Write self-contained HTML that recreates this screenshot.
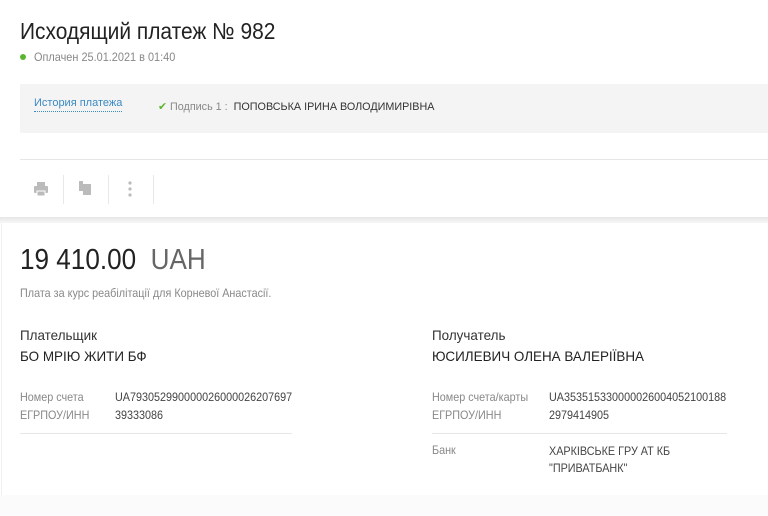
<!DOCTYPE html>
<html><head><meta charset="utf-8"><style>
*{margin:0;padding:0;box-sizing:border-box}
body{width:768px;height:516px;background:#fff;font-family:"Liberation Sans",sans-serif;position:relative;overflow:hidden;color:#222}
.a{position:absolute;white-space:nowrap;transform-origin:0 0}
.n{transform:scaleX(.9)}
.g{color:#888}
</style></head><body>
<div class="a" style="left:20px;top:18px;font-size:23px;color:#222;transform:scaleX(.91)">Исходящий платеж № 982</div>
<div class="a" style="left:20px;top:54px;width:6px;height:6px;border-radius:50%;background:#5cb531"></div>
<div class="a g" style="left:34px;top:50px;font-size:12px;transform:scaleX(.91)">Оплачен 25.01.2021 в 01:40</div>
<div class="a" style="left:20px;top:84px;width:748px;height:49px;background:#f4f4f4"></div>
<div class="a" style="left:34px;top:97px;font-size:11px;color:#3a8ac4;border-bottom:1px dotted #3a8ac4;padding-bottom:2px">История платежа</div>
<div class="a" style="left:158px;top:100px;font-size:11px;color:#888;transform:scaleX(.98)"><span style="color:#5cb531">✔</span> Подпись 1 : &nbsp;<span style="color:#333">ПОПОВСЬКА ІРИНА ВОЛОДИМИРІВНА</span></div>
<div class="a" style="left:20px;top:159px;width:748px;height:1px;background:#e6e6e6"></div>
<svg class="a" style="left:33px;top:181px" width="16" height="16" viewBox="0 0 16 16" fill="#bbb"><rect x="4" y="1" width="8" height="4"/><rect x="1" y="5" width="14" height="7" rx="1"/><rect x="4" y="10" width="8" height="5" fill="#bbb" stroke="#fff" stroke-width="1"/></svg>
<svg class="a" style="left:78px;top:180px" width="16" height="16" viewBox="0 0 16 16" fill="#bbb"><rect x="1" y="1" width="4" height="10"/><rect x="5" y="4" width="8" height="11"/></svg>
<svg class="a" style="left:128px;top:180px" width="4" height="18" fill="#bbb"><circle cx="2" cy="3" r="1.6"/><circle cx="2" cy="9" r="1.6"/><circle cx="2" cy="15" r="1.6"/></svg>
<div class="a" style="left:63px;top:175px;width:1px;height:29px;background:#e8e8e8"></div>
<div class="a" style="left:108px;top:175px;width:1px;height:29px;background:#e8e8e8"></div>
<div class="a" style="left:153px;top:175px;width:1px;height:29px;background:#e8e8e8"></div>
<div class="a" style="left:0;top:217px;width:768px;height:6px;background:linear-gradient(#e6e6e6,#f7f7f7)"></div>
<div class="a" style="left:1px;top:223px;width:1px;height:272px;background:#f0f0f0"></div>
<div class="a" style="left:0;top:495px;width:768px;height:21px;background:#fbfbfb"></div>
<div class="a n" style="left:20px;top:244px;font-size:29px;color:#222">19 410.00 <span style="color:#666">&nbsp;UAH</span></div>
<div class="a n g" style="left:20px;top:286px;font-size:12px">Плата за курс реабілітації для Корневої Анастасії.</div>
<div class="a" style="left:20px;top:327px;font-size:14px;color:#333;transform:scaleX(.96)">Плательщик</div>
<div class="a" style="left:20px;top:348px;font-size:14px;color:#222;transform:scaleX(.96)">БО МРІЮ ЖИТИ БФ</div>
<div class="a n g" style="left:20px;top:390px;font-size:12px">Номер счета</div>
<div class="a n" style="left:115px;top:390px;font-size:12px;color:#444">UA793052990000026000026207697</div>
<div class="a n g" style="left:20px;top:408px;font-size:12px">ЕГРПОУ/ИНН</div>
<div class="a n" style="left:115px;top:408px;font-size:12px;color:#444">39333086</div>
<div class="a" style="left:20px;top:433px;width:272px;height:1px;background:#e6e6e6"></div>
<div class="a" style="left:432px;top:327px;font-size:14px;color:#333;transform:scaleX(.96)">Получатель</div>
<div class="a" style="left:432px;top:348px;font-size:14px;color:#222;transform:scaleX(.96)">ЮСИЛЕВИЧ ОЛЕНА ВАЛЕРІЇВНА</div>
<div class="a n g" style="left:432px;top:390px;font-size:12px">Номер счета/карты</div>
<div class="a n" style="left:549px;top:390px;font-size:12px;color:#444">UA353515330000026004052100188</div>
<div class="a n g" style="left:432px;top:408px;font-size:12px">ЕГРПОУ/ИНН</div>
<div class="a n" style="left:549px;top:408px;font-size:12px;color:#444">2979414905</div>
<div class="a" style="left:432px;top:433px;width:295px;height:1px;background:#e6e6e6"></div>
<div class="a n g" style="left:432px;top:443px;font-size:12px">Банк</div>
<div class="a n" style="left:549px;top:443px;font-size:12px;color:#444;line-height:17px">ХАРКІВСЬКЕ ГРУ АТ КБ<br>"ПРИВАТБАНК"</div>
</body></html>
